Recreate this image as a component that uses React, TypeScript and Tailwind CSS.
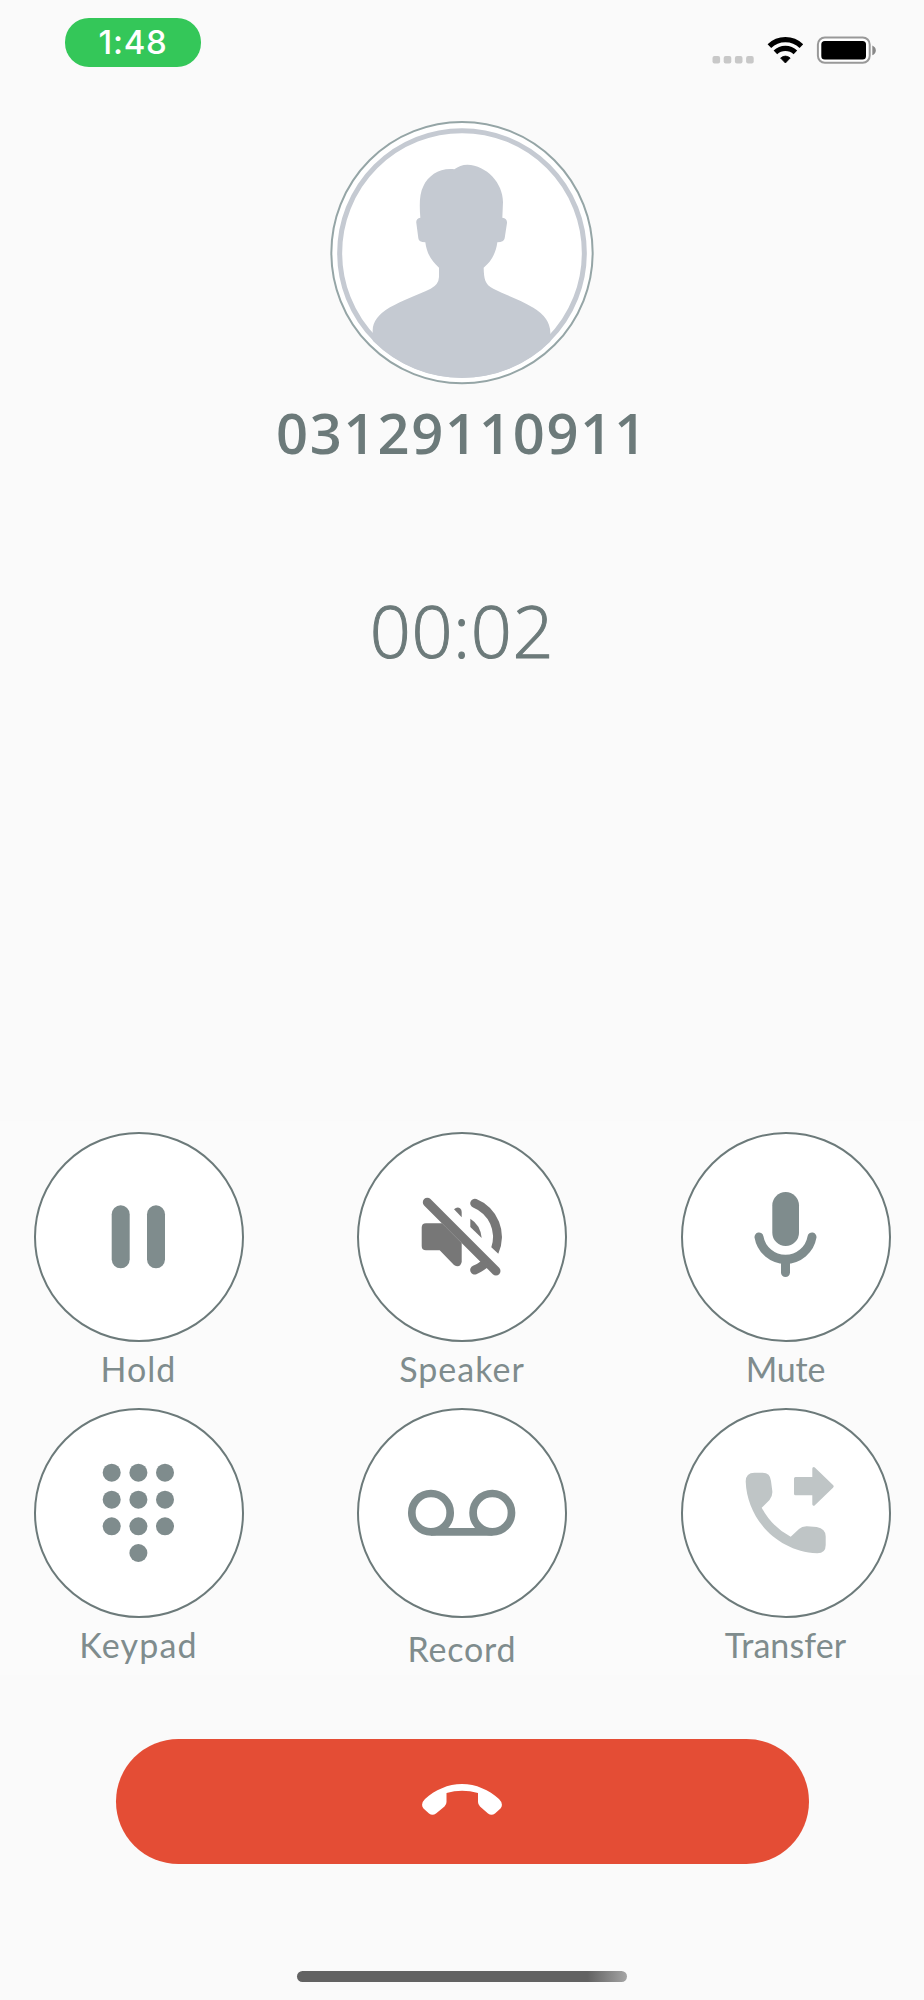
import type { ReactNode } from 'react';

interface CallButtonProps {
  label: string;
  labelClass?: string;
  children: ReactNode;
}

function CallButton({ label, labelClass = '', children }: CallButtonProps) {
  return (
    <div className="flex w-[210px] flex-col items-center">
      <button
        type="button"
        aria-label={label}
        className="h-[210px] w-[210px] rounded-full border-2 border-[#6c7a7a] bg-white"
      >
        <svg viewBox="2 2 206 206" className="h-full w-full text-[#7f8c8d]" fill="currentColor">
          {children}
        </svg>
      </button>
      <span className={`mt-[7px] whitespace-nowrap text-[34px] leading-10 text-[#7f8c8d] ${labelClass}`}>{label}</span>
    </div>
  );
}

function StatusBar() {
  return (
    <div className="flex h-[121px] items-start justify-between pl-[65px] pr-12 pt-[18px]">
      <div className="flex h-[49px] w-[136px] items-center justify-center rounded-[24px] bg-[#34c759] font-['Inter',sans-serif] text-[33px] font-medium leading-none tracking-[0.7px] text-white">
        1:48
      </div>
      <svg viewBox="0 0 164 28" className="mt-[18px] h-7 w-[164px]">
        <g fill="#c8c8c8">
          <rect x="0.5" y="20" width="7.6" height="7.6" rx="2" />
          <rect x="11.7" y="20" width="7.6" height="7.6" rx="2" />
          <rect x="22.9" y="20" width="7.6" height="7.6" rx="2" />
          <rect x="34.1" y="20" width="7.6" height="7.6" rx="2" />
        </g>
        <g fill="none" stroke="#000" strokeWidth="5.2">
          <path d="M57.4 10.2a23 23 0 0 1 32 0" />
          <path d="M63.4 16.3a14.5 14.5 0 0 1 20 0" />
        </g>
        <path d="M68.6 22q4.8-3.8 9.6 0l-4.8 5z" fill="#000" stroke="#000" strokeWidth="0.8" strokeLinejoin="round" />
        <rect x="105.9" y="1.4" width="51.8" height="25.4" rx="7" fill="#fff" stroke="#999" strokeWidth="2" />
        <rect x="109.3" y="5" width="44.7" height="18.6" rx="3.5" fill="#000" />
        <path d="M160.3 9.6q3.5 1.6 3.5 4.8t-3.5 4.8z" fill="#888" />
      </svg>
    </div>
  );
}

function Avatar() {
  return (
    <svg viewBox="30 32 792 792" className="h-[264px] w-[264px]">
      <defs>
        <clipPath id="avatar-clip">
          <circle cx="426" cy="428" r="375" />
        </clipPath>
      </defs>
      <circle cx="426" cy="427" r="392" fill="#fff" stroke="#95a5a6" strokeWidth="6" />
      <circle cx="426" cy="428" r="367" fill="none" stroke="#c5cad2" strokeWidth="15" />
      <path
        clipPath="url(#avatar-clip)"
        fill="#c5cad2"
        d="M403 177Q420 163 442 163C500 165 549 218 549 275L547 322Q562 324 561 338L554 384Q552 396 532 396C528 430 512 455 491 472C492 505 494 522 520 535C560 556 600 568 640 592Q690 622 691 666V820H158V660Q158 622 210 591C245 570 290 555 332 535Q356 523 357 500V472C335 452 320 430 316 396Q296 396 295 384L289 338Q287 325 301 322C298 285 298 250 310 228C325 195 360 172 403 177Z"
      />
    </svg>
  );
}

export default function App() {
  return (
    <div className="flex h-[2000px] w-[924px] flex-col overflow-hidden bg-[#fafafa] font-['Lato',sans-serif]">
      <StatusBar />

      <div className="flex h-[1000px] flex-col items-center text-[#6c7a7a]">
        <Avatar />
        <h1 className="mt-[11px] font-['Open_Sans',sans-serif] text-[56px] font-semibold leading-[72px] tracking-[1.8px]">
          03129110911
        </h1>
        <p className="mt-[117px] font-['Open_Sans',sans-serif] text-[72px] font-light leading-[90px] tracking-[0.6px] [-webkit-text-stroke:1px_#6c7a7a]">
          00:02
        </p>
      </div>

      <div className="grid h-[554px] grid-cols-[210px_210px_210px] content-start justify-between gap-y-[19px] bg-[#fbfbfb] pl-[33.5px] pr-[33.5px] pt-[10.5px]">
        <CallButton label="Hold" labelClass="tracking-[1px]">
          <rect x="77.7" y="73.3" width="18" height="63" rx="9" />
          <rect x="113" y="73.3" width="18" height="63" rx="9" />
        </CallButton>
        <CallButton label="Speaker" labelClass="tracking-[1px]">
          <g fill="#777">
            <path d="M69 91.3H85L104.7 111V130Q103 136.500 97 133L82.700 118.300H69Q64.700 118.300 64.700 114V95.600Q64.700 91.300 69 91.300Z" />
            <path d="M97 77.300Q100 74.600 103 76.200Q104.700 77.300 104.700 80V85.300Z" />
            <path d="M113.300 86.700Q123.500 93 124.700 106L113.300 95Z" />
            <path d="M119.400 67.100A40.700 40.700 0 0 1 141.300 121.700L134.300 115.300A31.700 31.700 0 0 0 116.100 75.500A4.500 4.500 0 0 1 119.400 67.100Z" />
          </g>
          <g fill="none" stroke="#777" strokeWidth="9" strokeLinecap="round">
            <path d="M70.300 70.300L139 139" />
            <path d="M117.700 138Q122.500 136 127 132.500" />
          </g>
        </CallButton>
        <CallButton label="Mute" labelClass="tracking-[-0.2px]">
          <rect x="91.3" y="60" width="26.7" height="54" rx="13.3" />
          <g fill="none" stroke="currentColor" strokeWidth="9" strokeLinecap="round">
            <path d="M78 105A26.900 26.900 0 0 0 131 105" />
            <path d="M104.500 128V140.500" />
          </g>
        </CallButton>
        <CallButton label="Keypad" labelClass="tracking-[1.2px]">
          {[64.7, 91.7, 118.3].map((y) =>
            [77.7, 104.4, 131].map((x) => <circle key={`${x}-${y}`} cx={x} cy={y} r="9" />)
          )}
          <circle cx="104.4" cy="145" r="9" />
        </CallButton>
        <CallButton label="Record" labelClass="pt-1 tracking-[0.8px]">
          <g fill="none" stroke="currentColor" strokeWidth="7.7">
            <circle cx="74" cy="104.7" r="19.2" />
            <circle cx="135.3" cy="104.7" r="19.2" />
            <path d="M74 123.900H135.300" />
          </g>
        </CallButton>
        <CallButton label="Transfer" labelClass="tracking-[0.1px]">
          <g fill="#bfc5c6">
            <path d="M64.700 73.500Q64.700 64.700 73.500 64.700H81.500Q89.300 64.700 90 73L91.300 83Q91.800 88 88.500 92L80.700 99.700Q91 119 109.700 128.700L118 121Q121 118 126 118.200L135.700 119Q144.700 120.500 144.700 128.500V137Q144.700 145.500 136 145.300C96 143 66 111 64.700 73.500Z" />
            <path
              d="M114.500 70.500H132.800V60.500L151.200 78.300L132.800 96.200V85.800H114.500Z"
              stroke="#bfc5c6"
              strokeWidth="3"
              strokeLinejoin="round"
            />
          </g>
        </CallButton>
      </div>

      <div className="flex flex-1 flex-col items-center pt-[64px]">
        <button
          type="button"
          aria-label="End call"
          className="flex h-[125px] w-[693px] justify-center rounded-full bg-[#e44d35] pt-[45px]"
        >
          <svg viewBox="0 0 80 31" className="h-[31px] w-20" fill="#fff">
            <path d="M40 0C54 0 67 6 77 15Q82 20 78.500 24.500L73 29.500Q69.500 32 66 29.500L58 22.500Q56 20.500 56 18V9Q40 4.500 24.500 9V18Q24.500 20.500 22.500 22.500L14 29.500Q10.500 32 7 29.500L1.500 24.500Q-2 20 3 15C13 6 26 0 40 0Z" />
          </svg>
        </button>
        <div className="mt-[107px] h-[11px] w-[330px] rounded-full bg-linear-to-r from-[#626262] from-88% to-[#a5a5a5]" />
      </div>
    </div>
  );
}
